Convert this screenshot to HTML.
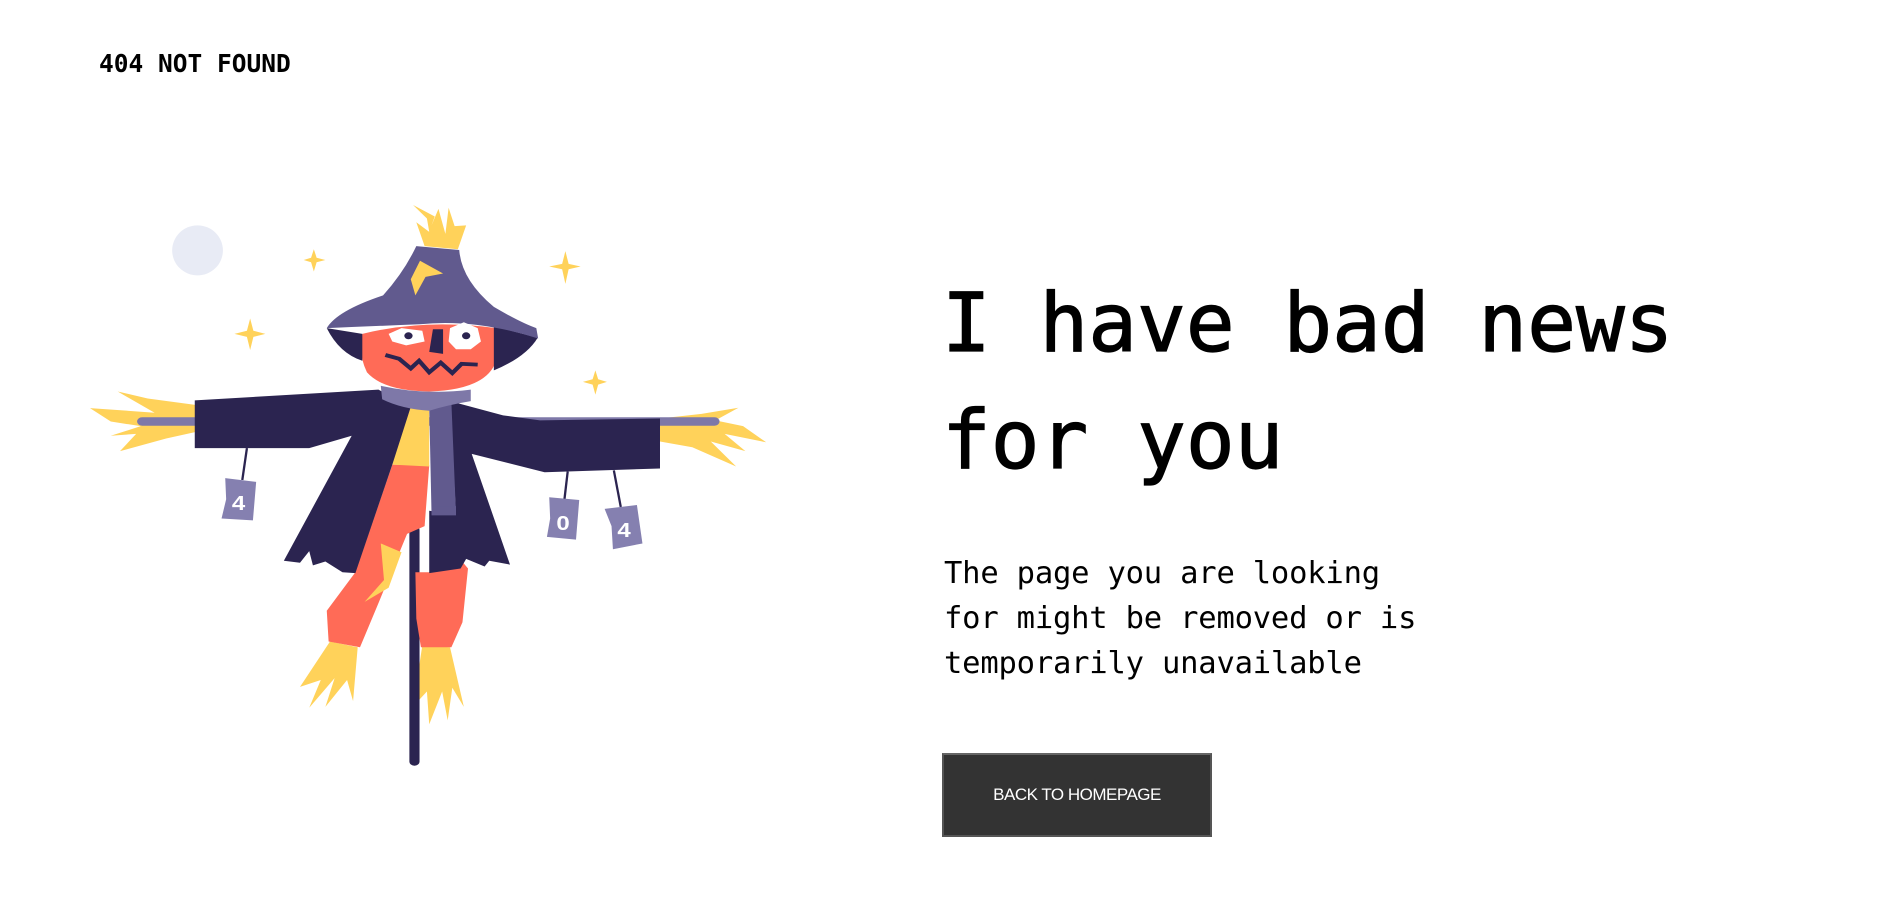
<!DOCTYPE html>
<html><head><meta charset="utf-8"><style>
html,body{margin:0;padding:0;background:#fff;width:1887px;height:924px;overflow:hidden;position:relative}
.logo{position:absolute;left:99px;top:49px;font:bold 24.5px/30px "DejaVu Sans Mono",monospace;color:#000;letter-spacing:0px}
h1{position:absolute;left:942px;top:266px;margin:0;font:81px/117px "DejaVu Sans Mono",monospace;color:#000;font-weight:normal;-webkit-text-stroke:1.2px #000}
p{position:absolute;left:944px;top:551px;margin:0;font:30.5px/45px "DejaVu Sans Mono",monospace;color:#000;letter-spacing:-0.2px}
.btn{position:absolute;left:942px;top:753px;width:266px;height:80px;background:#333;border:2px solid #555;border-top-color:#666;color:#fff;font:17px/80px "Liberation Sans",Arial,sans-serif;text-align:center;letter-spacing:-0.5px}
svg{position:absolute;left:60px;top:180px}
</style></head><body>
<div class="logo">404 NOT FOUND</div>
<svg width="720" height="600" viewBox="0 0 1560 1560" preserveAspectRatio="none">
<ellipse cx="298" cy="183" rx="55" ry="65" fill="#e8ebf5"/>
<g fill="#ffd25a">
<path d="M550,180 L556,202 L575,208 L556,214 L550,238 L544,214 L528,208 L544,202Z"/>
<path d="M1095,185 L1102,218 L1128,225 L1102,232 L1095,270 L1088,232 L1060,225 L1088,218Z"/>
<path d="M412,360 L419,392 L445,400 L419,408 L412,442 L405,408 L378,400 L405,392Z"/>
<path d="M1160,495 L1166,518 L1185,525 L1166,532 L1160,558 L1154,532 L1133,525 L1154,518Z"/>
<path d="M765,65 L812,95 L805,118 L820,75 L835,140 L842,72 L855,120 L880,118 L862,180 L790,172 L772,110 L800,135 L795,100Z"/>
<path d="M295,585 L190,568 L125,550 L205,605 L65,593 L110,628 L175,640 L110,665 L165,660 L130,705 L230,672 L295,655Z"/>
<path d="M1300,620 L1390,608 L1470,592 L1420,625 L1480,640 L1530,682 L1440,660 L1485,705 L1410,680 L1465,745 L1370,695 L1300,680Z"/>
<path d="M585,1200 L645,1215 L635,1355 L622,1300 L575,1370 L595,1295 L540,1372 L565,1300 L520,1318 Z"/>
<path d="M785,1210 L845,1215 L875,1370 L850,1320 L840,1405 L828,1330 L800,1415 L795,1330 L760,1375 L775,1290Z"/>
</g>
<line x1="768" y1="910" x2="768" y2="1512" stroke="#2b2450" stroke-width="22" stroke-linecap="round"/>
<line x1="178" y1="628" x2="1418" y2="628" stroke="#7e78a8" stroke-width="22" stroke-linecap="round"/>
<path d="M720,740 L800,742 L790,900 L752,920 L690,1100 L650,1215 L582,1200 L578,1120 L640,1020Z" fill="#ff6b57"/>
<path d="M800,1020 L870,990 L884,1010 L872,1150 L848,1215 L782,1215 L772,1140 L770,1020Z" fill="#ff6b57"/>
<path d="M695,945 L740,968 L712,1060 L660,1097 L702,1040Z" fill="#ffd25a"/>
<path d="M755,585 L800,585 L800,745 L720,740Z" fill="#ffd25a"/>
<g fill="#2b2450">
<path d="M292,573 L690,545 L760,590 L720,740 L640,1022 L612,1020 L575,992 L548,1002 L540,965 L520,995 L485,990 L632,665 L540,697 L292,697Z"/>
<path d="M845,575 L960,612 L1040,625 L1300,620 L1300,750 L1050,760 L892,712 L975,1000 L930,990 L920,1005 L880,985 L868,1010 L800,1022 L800,860 L858,870Z"/>
</g>
<path d="M800,590 L848,578 L858,870 L805,870Z" fill="#615a8e"/>
<path d="M805,848 L858,848 L858,872 L805,872Z" fill="#615a8e"/>
<path d="M655,400 Q790,360 945,385 L945,470 Q925,545 800,550 Q700,548 665,500 Q645,450 655,400Z" fill="#ff6b57"/>
<path d="M695,535 Q790,560 890,545 L890,575 Q840,585 800,600 Q740,595 698,570Z" fill="#7e78a8"/>
<path d="M578,385 L655,400 L655,470 Q605,450 578,385Z" fill="#2b2450"/>
<path d="M940,380 L1035,410 Q1010,460 940,495Z" fill="#2b2450"/>
<path d="M772,172 L865,182 Q870,260 940,330 Q1000,372 1032,385 L1036,412 Q900,360 780,375 Q680,380 578,385 Q600,340 700,300 Q745,240 772,172Z" fill="#615a8e"/>
<path d="M780,210 L830,243 L792,252 L770,300 L760,258Z" fill="#ffd25a"/>
<path d="M712,400 L740,385 L785,392 L790,420 L750,430 L720,420Z" fill="#fff"/>
<circle cx="755" cy="405" r="9" fill="#2b2450"/>
<path d="M845,385 L875,370 L905,385 L912,420 L890,440 L858,440 L842,420Z" fill="#fff"/>
<circle cx="880" cy="405" r="9" fill="#2b2450"/>
<path d="M808,388 L830,388 L830,452 L800,447Z" fill="#2b2450"/>
<path d="M705,455 L735,465 L760,490 L778,470 L800,500 L825,475 L850,502 L870,478 L905,480" fill="none" stroke="#2b2450" stroke-width="10" stroke-linejoin="miter"/>
<g stroke="#2b2450" stroke-width="5">
<line x1="405" y1="697" x2="395" y2="780"/>
<line x1="1100" y1="758" x2="1093" y2="830"/>
<line x1="1200" y1="755" x2="1215" y2="850"/>
</g>
<g fill="#8580b0">
<path d="M358,775 L425,785 L418,885 L350,880 L360,830Z"/>
<path d="M1060,825 L1125,832 L1118,935 L1055,928 L1062,880Z"/>
<path d="M1180,855 L1250,845 L1262,945 L1198,960 L1195,900Z"/>
</g>
<g fill="#fff" font-family="Liberation Sans,sans-serif" font-weight="bold" font-size="52" text-anchor="middle">
<text x="387" y="858">4</text><text x="1090" y="910">0</text><text x="1222" y="928">4</text>
</g>
</svg>
<h1>I have bad news<br>for you</h1>
<p>The page you are looking<br>for might be removed or is<br>temporarily unavailable</p>
<div class="btn">BACK TO HOMEPAGE</div>
</body></html>
